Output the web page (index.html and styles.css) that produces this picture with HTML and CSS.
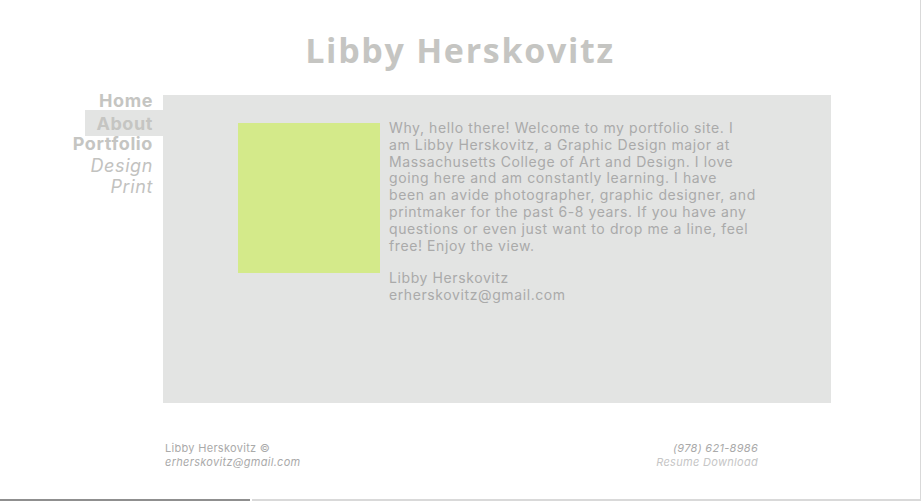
FILE: index.html
```html
<!DOCTYPE html>
<html lang="en">
<head>
<meta charset="utf-8">
<title>Libby Herskovitz</title>
<link rel="stylesheet" href="styles.css">
</head>
<body>
<div class="page">
  <header class="site-header">
    <h1 class="site-title">Libby Herskovitz</h1>
  </header>
  <div class="main">
    <nav class="nav">
      <a class="nav-item bold">Home</a>
      <a class="nav-item bold active">About</a>
      <a class="nav-item bold">Portfolio</a>
      <a class="nav-item sub">Design</a>
      <a class="nav-item sub">Print</a>
    </nav>
    <section class="panel">
      <div class="photo"></div>
      <div class="bio">
        <p>Why, hello there! Welcome to my portfolio site. I<br>am Libby Herskovitz, a Graphic Design major at<br>Massachusetts College of Art and Design. I love<br>going here and am constantly learning. I have<br>been an avide photographer, graphic designer, and<br>printmaker for the past 6-8 years. If you have any<br>questions or even just want to drop me a line, feel<br>free! Enjoy the view.</p>
        <p>Libby Herskovitz<br>erherskovitz@gmail.com</p>
      </div>
    </section>
  </div>
  <footer class="footer">
    <div class="foot-left">
      <div>Libby Herskovitz ©</div>
      <div class="it">erherskovitz@gmail.com</div>
    </div>
    <div class="foot-right">
      <div class="it">(978) 621-8986</div>
      <div class="it light">Resume Download</div>
    </div>
  </footer>
  <div class="hscroll">
    <div class="thumb"></div>
    <div class="track"></div>
  </div>
</div>
</body>
</html>
```
FILE: styles.css
```css
html, body {
  margin: 0;
  padding: 0;
  background: #fff;
}
body {
  width: 921px;
  height: 501px;
  overflow: hidden;
  font-family: Inter, "Open Sans", sans-serif;
}
.page {
  width: 920px;
  height: 501px;
  border-right: 1px solid #d9d9d9;
  display: flex;
  flex-direction: column;
}
.site-header {
  display: flex;
  justify-content: center;
  padding-top: 28px;
}
.site-title {
  margin: 0;
  font-family: "Open Sans", Inter, sans-serif;
  font-weight: 700;
  font-size: 34px;
  line-height: 44px;
  color: #c5c5c2;
  letter-spacing: 1.7px;
}
.main {
  display: flex;
  margin-top: 18px;
}
.nav {
  width: 163px;
  flex: none;
  display: flex;
  flex-direction: column;
}
.nav-item {
  display: block;
  text-align: right;
  padding-right: 10px;
  font-size: 18px;
  line-height: 21.6px;
  color: #c5c5c2;
  white-space: nowrap;
  letter-spacing: 0.6px;
}
.nav-item.bold {
  font-weight: 700;
}
.nav-item.sub {
  font-style: italic;
  font-weight: 400;
  color: #c2c2bf;
}
.nav-item.active {
  margin-left: 85px;
  background: #e3e4e3;
  padding-top: 3px;
  padding-bottom: 2px;
  margin-top: -2px;
  margin-bottom: -3px;
}
.panel {
  margin-top: 5px;
  width: 668px;
  height: 308px;
  background: #e3e4e3;
  display: flex;
  box-sizing: border-box;
  padding: 28px 0 0 75px;
}
.photo {
  width: 142px;
  height: 150px;
  background: #d4ea8a;
  flex: none;
}
.bio {
  margin-left: 9px;
  width: 380px;
  margin-top: -3px;
  font-size: 14px;
  line-height: 16.8px;
  letter-spacing: 0.6px;
  color: #aaaaaa;
  white-space: nowrap;
}
.bio p {
  margin: 0 0 16px;
}
.footer {
  display: flex;
  justify-content: space-between;
  margin: 38px 0 0 165px;
  width: 593px;
  font-size: 11px;
  line-height: 14px;
  color: #aaaaaa;
  letter-spacing: 0.3px;
}
.foot-right {
  text-align: right;
}
.it {
  font-style: italic;
}
.light {
  color: #c6c6c6;
}
.hscroll {
  margin-top: auto;
  display: flex;
  gap: 2px;
  height: 2px;
  width: 921px;
}
.thumb {
  width: 250px;
  background: #8f8f8f;
}
.track {
  flex: 1;
  background: #d9d9d9;
}
```
